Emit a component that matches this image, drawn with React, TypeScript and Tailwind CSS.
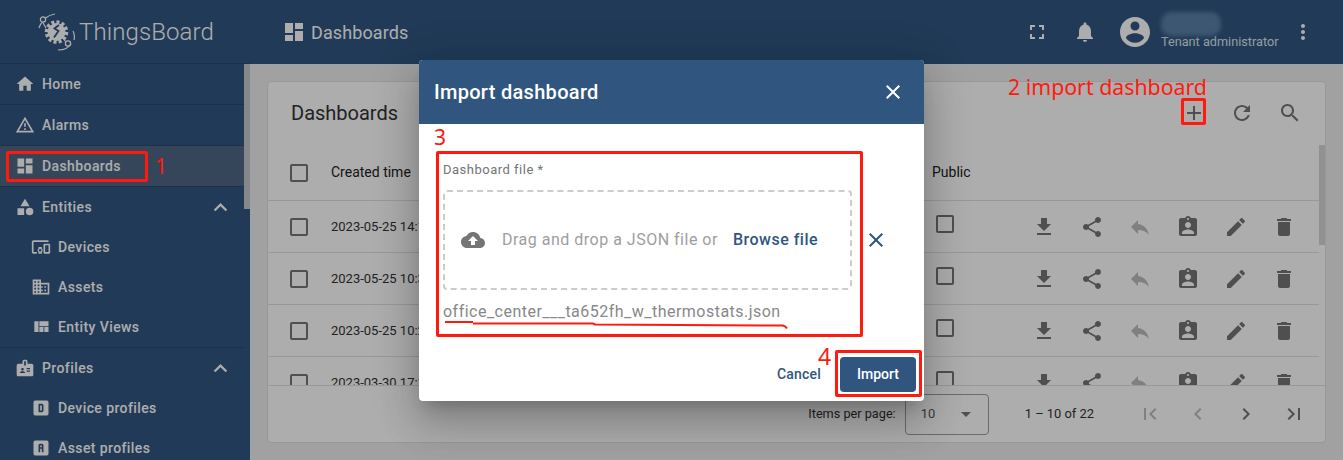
import React from "react";

const P = {
  home: "M10 20v-6h4v6h5v-8h3L12 3 2 12h3v8z",
  warn: "M12 5.99L19.53 19H4.47L12 5.99M12 2L1 21h22L12 2zm1 14h-2v2h2v-2zm0-6h-2v4h2v-4z",
  dash: "M3 13h8V3H3v10zm0 8h8v-6H3v6zm10 0h8V11h-8v10zm0-18v6h8V3h-8z",
  cat: "M12 2l-5.5 9h11zM17.5 13a4.5 4.5 0 1 0 0 9 4.5 4.5 0 0 0 0-9zM3 13.5h8v8H3z",
  dev: "M3 6h18V4H3c-1.1 0-2 .9-2 2v12c0 1.1.9 2 2 2h4v-2H3V6zm10 6H9v1.78c-.61.55-1 1.33-1 2.22s.39 1.67 1 2.22V20h4v-1.78c.61-.55 1-1.34 1-2.22s-.39-1.67-1-2.22V12zm-2 5.5c-.83 0-1.5-.67-1.5-1.5s.67-1.5 1.5-1.5 1.5.67 1.5 1.5-.67 1.5-1.5 1.5zM22 8h-6c-.5 0-1 .5-1 1v10c0 .5.5 1 1 1h6c.5 0 1-.5 1-1V9c0-.5-.5-1-1-1zm-1 10h-4v-8h4v8z",
  domain: "M12 7V3H2v18h20V7H12zM6 19H4v-2h2v2zm0-4H4v-2h2v2zm0-4H4V9h2v2zm0-4H4V5h2v2zm4 12H8v-2h2v2zm0-4H8v-2h2v2zm0-4H8V9h2v2zm0-4H8V5h2v2zm10 12h-8v-2h2v-2h-2v-2h2v-2h-2V9h8v10zm-2-8h-2v2h2v-2zm0 4h-2v2h2v-2z",
  quilt: "M10 18h5v-6h-5v6zm-6 0h5V5H4v13zm12 0h5v-6h-5v6zM10 5v6h11V5H10z",
  badge: "M20 7h-5V4c0-1.1-.9-2-2-2h-2c-1.1 0-2 .9-2 2v3H4c-1.1 0-2 .9-2 2v11c0 1.1.9 2 2 2h16c1.1 0 2-.9 2-2V9c0-1.1-.9-2-2-2zM9 12c.83 0 1.5.67 1.5 1.5S9.83 15 9 15s-1.5-.67-1.5-1.5S8.17 12 9 12zm3 6H6v-.75c0-1 2-1.5 3-1.5s3 .5 3 1.5V18zm1-9h-2V4h2v5zm5 7.5h-4V15h4v1.5zm0-3h-4V12h4v1.5z",
  boxD: "M9,7V17H13A2,2 0 0,0 15,15V9A2,2 0 0,0 13,7H9M11,9H13V15H11V9M5,3H19A2,2 0 0,1 21,5V19A2,2 0 0,1 19,21H5A2,2 0 0,1 3,19V5A2,2 0 0,1 5,3Z",
  boxA: "M11,7A2,2 0 0,0 9,9V17H11V13H13V17H15V9A2,2 0 0,0 13,7H11M11,9H13V11H11V9M5,3H19A2,2 0 0,1 21,5V19A2,2 0 0,1 19,21H5A2,2 0 0,1 3,19V5A2,2 0 0,1 5,3Z",
  less: "M12 8l-6 6 1.41 1.41L12 10.83l4.59 4.58L18 14z",
  full: "M7 14H5v5h5v-2H7v-3zm-2-4h2V7h3V5H5v5zm12 7h-3v2h5v-5h-2v3zM14 5v2h3v3h2V5h-5z",
  bell: "M12 22c1.1 0 2-.9 2-2h-4c0 1.1.89 2 2 2zm6-6v-5c0-3.07-1.64-5.64-4.5-6.32V4c0-.83-.67-1.5-1.5-1.5s-1.5.67-1.5 1.5v.68C7.63 5.36 6 7.92 6 11v5l-2 2v1h16v-1l-2-2z",
  acct: "M12 2C6.48 2 2 6.48 2 12s4.48 10 10 10 10-4.48 10-10S17.52 2 12 2zm0 3c1.66 0 3 1.34 3 3s-1.34 3-3 3-3-1.34-3-3 1.34-3 3-3zm0 14.2c-2.5 0-4.71-1.28-6-3.22.03-1.99 4-3.08 6-3.08 1.99 0 5.97 1.09 6 3.08-1.29 1.94-3.5 3.22-6 3.22z",
  more: "M12 8c1.1 0 2-.9 2-2s-.9-2-2-2-2 .9-2 2 .9 2 2 2zm0 2c-1.1 0-2 .9-2 2s.9 2 2 2 2-.9 2-2-.9-2-2-2zm0 6c-1.1 0-2 .9-2 2s.9 2 2 2 2-.9 2-2-.9-2-2-2z",
  add: "M19 13h-6v6h-2v-6H5v-2h6V5h2v6h6v2z",
  refresh: "M17.65 6.35C16.2 4.9 14.21 4 12 4c-4.42 0-7.99 3.58-7.99 8s3.57 8 7.99 8c3.73 0 6.84-2.55 7.73-6h-2.08c-.82 2.33-3.04 4-5.65 4-3.31 0-6-2.69-6-6s2.69-6 6-6c1.66 0 3.14.69 4.22 1.78L13 11h7V4l-2.35 2.35z",
  search: "M15.5 14h-.79l-.28-.27C15.41 12.59 16 11.11 16 9.5 16 5.91 13.09 3 9.5 3S3 5.91 3 9.5 5.91 16 9.5 16c1.61 0 3.09-.59 4.23-1.57l.27.28v.79l5 4.99L20.49 19l-4.99-5zm-6 0C7.01 14 5 11.99 5 9.5S7.01 5 9.5 5 14 7.01 14 9.5 11.99 14 9.5 14z",
  down: "M19 9h-4V3H9v6H5l7 7 7-7zM5 18v2h14v-2H5z",
  share: "M18 16.08c-.76 0-1.44.3-1.96.77L8.91 12.7c.05-.23.09-.46.09-.7s-.04-.47-.09-.7l7.05-4.11c.54.5 1.25.81 2.04.81 1.66 0 3-1.34 3-3s-1.34-3-3-3-3 1.34-3 3c0 .24.04.47.09.7L8.04 9.81C7.5 9.31 6.79 9 6 9c-1.66 0-3 1.34-3 3s1.34 3 3 3c.79 0 1.5-.31 2.04-.81l7.12 4.16c-.05.21-.08.43-.08.65 0 1.61 1.31 2.92 2.92 2.92s2.92-1.31 2.92-2.92-1.31-2.92-2.92-2.92z",
  reply: "M10 9V5l-7 7 7 7v-4.1c5 0 8.5 1.6 11 5.1-1-5-4-10-11-11z",
  assign: "M19 3h-4.18C14.4 1.84 13.3 1 12 1c-1.3 0-2.4.84-2.82 2H5c-1.1 0-2 .9-2 2v14c0 1.1.9 2 2 2h14c1.1 0 2-.9 2-2V5c0-1.1-.9-2-2-2zm-7 0c.55 0 1 .45 1 1s-.45 1-1 1-1-.45-1-1 .45-1 1-1zm0 4c1.66 0 3 1.34 3 3s-1.34 3-3 3-3-1.34-3-3 1.34-3 3-3zm6 12H6v-1.4c0-2 4-3.1 6-3.1s6 1.1 6 3.1V19z",
  edit: "M3 17.25V21h3.75L17.81 9.94l-3.75-3.75L3 17.25zM20.71 7.04c.39-.39.39-1.02 0-1.41l-2.34-2.34c-.39-.39-1.02-.39-1.41 0l-1.83 1.83 3.75 3.75 1.83-1.83z",
  del: "M6 19c0 1.1.9 2 2 2h8c1.1 0 2-.9 2-2V7H6v12zM19 4h-3.5l-1-1h-5l-1 1H5v2h14V4z",
  close: "M19 6.41L17.59 5 12 10.59 6.41 5 5 6.41 10.59 12 5 17.59 6.41 19 12 13.41 17.59 19 19 17.59 13.41 12z",
  cloud: "M19.35 10.04C18.67 6.59 15.64 4 12 4 9.11 4 6.6 5.64 5.35 8.04 2.34 8.36 0 10.91 0 14c0 3.31 2.69 6 6 6h13c2.76 0 5-2.24 5-5 0-2.64-2.05-4.78-4.65-4.96zM14 13v4h-4v-4H7l5-5 5 5h-3z",
  first: "M18.41 16.59L13.82 12l4.59-4.59L17 6l-6 6 6 6zM6 6h2v12H6z",
  left: "M15.41 7.41L14 6l-6 6 6 6 1.41-1.41L10.83 12z",
  right: "M10 6L8.59 7.41 13.17 12l-4.58 4.59L10 18l6-6z",
  last: "M5.59 7.41L10.18 12l-4.59 4.59L7 18l6-6-6-6zM16 6h2v12h-2z",
  drop: "M7 10l5 5 5-5z",
};

function I({ d, size = 24, className = "" }: { d: string; size?: number; className?: string }) {
  return (
    <svg width={size} height={size} viewBox="0 0 24 24" fill="currentColor" fillRule="evenodd" className={"shrink-0 " + className}>
      <path d={d} />
    </svg>
  );
}

function Logo() {
  return (
    <svg width="37" height="38" viewBox="0 0 37 38" fill="none" className="shrink-0 text-white">
      <circle cx="18.5" cy="19" r="10" stroke="currentColor" strokeWidth="3.5" strokeDasharray="3 2.2" />
      <circle cx="18.5" cy="19" r="9" fill="currentColor" />
      <path d="M21 12l-4.5 3.5 4 2.5-4.5 6.5" stroke="#305680" strokeWidth="1.8" />
      <circle cx="5" cy="6.5" r="2.6" stroke="currentColor" strokeWidth="1.3" />
      <circle cx="30" cy="30.5" r="2.6" stroke="currentColor" strokeWidth="1.3" />
      <path d="M7.5 5C10 3 13 1.5 17 1M3.5 9.5C2.5 12 1.5 13 1 15M4.5 9l3.5 6" stroke="currentColor" strokeWidth="1.2" />
      <path d="M33 31c-2 2.5-3 3.5-5 4.5-3 1.5-5 1.5-8 1.5M35 18c1.5 3 1.7 6 1 9M27.5 28.5l-3-4" stroke="currentColor" strokeWidth="1.2" />
    </svg>
  );
}

const menuText = "ml-[7px] flex-1 text-[14px] font-medium tracking-[0.4px]";

function Top({ icon, label, active }: { icon: string; label: string; active?: boolean }) {
  return (
    <div className={"flex h-[41px] items-center border-b border-[#2b4a6e] pl-[15px] pr-[10px] " + (active ? "bg-[#4e6885]" : "")}>
      <I d={icon} size={20} />
      <span className={menuText}>{label}</span>
    </div>
  );
}

function Sub({ icon, label }: { icon: string; label: string }) {
  return (
    <div className="flex h-[40px] items-center pl-[31px]">
      <I d={icon} size={20} />
      <span className={menuText}>{label}</span>
    </div>
  );
}

function Box({ className = "" }: { className?: string }) {
  return <div className={"h-[18px] w-[18px] rounded-[2px] border-2 border-[#757575] " + className} />;
}

function Row({ time }: { time: string }) {
  return (
    <div className="grid h-[52px] shrink-0 grid-cols-[63px_601px_88px_288px] items-center border-b border-[#e0e0e0] text-[13px] text-[#333]">
      <div className="pl-[22px]"><Box /></div>
      <div>{time}</div>
      <div className="pb-[6px] pl-[4px]"><Box /></div>
      <div className="flex text-[#757575]">
        {[P.down, P.share, P.reply, P.assign, P.edit, P.del].map((d, i) => (
          <div key={i} className={"flex w-[48px] justify-center " + (i === 2 ? "text-[#bdbdbd]" : "")}>
            <I d={d} />
          </div>
        ))}
      </div>
    </div>
  );
}

const shot = "shadow-[0_11px_15px_-7px_rgba(0,0,0,0.2),0_24px_38px_3px_rgba(0,0,0,0.14),0_9px_46px_8px_rgba(0,0,0,0.12)]";
const note = "absolute font-['Noto_Sans',sans-serif] text-[#ff1a0d] leading-none";
const mark = "absolute rounded-[2px] border-[3px] border-[#ff1a0d]";

export default function App() {
  return (
    <div className="relative flex h-[460px] w-full overflow-hidden bg-[#eeeeee] font-['Roboto',sans-serif]">
      <aside className="flex h-[460px] w-[250px] shrink-0 flex-col overflow-hidden bg-[#305680] text-white">
        <div className="flex h-[64px] shrink-0 items-center border-b border-[#2b4a6e] pl-[38px]">
          <Logo />
          <span className="ml-[4px] text-[24px] font-light tracking-[0.1px]">ThingsBoard</span>
        </div>
        <div className="flex flex-1">
          <nav className="w-[244px]">
            <Top icon={P.home} label="Home" />
            <Top icon={P.warn} label="Alarms" />
            <Top icon={P.dash} label="Dashboards" active />
            <div className="flex h-[40px] items-center pl-[15px] pr-[10px]">
              <I d={P.cat} size={20} />
              <span className={menuText}>Entities</span>
              <I d={P.less} size={27} />
            </div>
            <Sub icon={P.dev} label="Devices" />
            <Sub icon={P.domain} label="Assets" />
            <div className="border-b border-[#2b4a6e]"><Sub icon={P.quilt} label="Entity Views" /></div>
            <div className="flex h-[40px] items-center pl-[15px] pr-[10px]">
              <I d={P.badge} size={20} />
              <span className={menuText}>Profiles</span>
              <I d={P.less} size={27} />
            </div>
            <Sub icon={P.boxD} label="Device profiles" />
            <Sub icon={P.boxA} label="Asset profiles" />
          </nav>
          <div className="w-[6px]"><div className="h-[145px] bg-[#c4c8cc]" /></div>
        </div>
      </aside>

      <main className="flex min-w-0 flex-1 flex-col">
        <header className="flex h-[64px] shrink-0 items-center bg-[#305680] text-white">
          <I d={P.dash} className="ml-[32px]" />
          <span className="ml-[5px] flex-1 text-[18px] tracking-[0.1px]">Dashboards</span>
          <I d={P.full} className="mr-[24px]" />
          <I d={P.bell} className="mr-[20px]" />
          <I d={P.acct} size={36} />
          <div className="relative ml-[8px] flex h-[64px] w-[124px] flex-col justify-end pb-[15px]">
            <div className="absolute left-0 top-[12px] h-[24px] w-[60px] rounded-[10px] bg-[#5a80a8] blur-[2px]" />
            <span className="whitespace-nowrap text-[12.7px] leading-none text-[#dfe6ee]">Tenant administrator</span>
          </div>
          <I d={P.more} className="ml-[6px] mr-[28px]" />
        </header>

        <div className="flex min-h-0 flex-1 p-[17px]">
          <section className="flex w-[1059px] flex-col rounded-[4px] border border-[#e0e0e0] bg-white">
            <div className="flex h-[63px] shrink-0 items-center pb-[2px] text-[#757575]">
              <span className="ml-[23px] flex-1 text-[20px] text-[#333]">Dashboards</span>
              <div className="flex w-[48px] justify-center"><I d={P.add} /></div>
              <div className="flex w-[48px] justify-center"><I d={P.refresh} /></div>
              <div className="mr-[11px] flex w-[48px] justify-center"><I d={P.search} /></div>
            </div>
            <div className="flex h-[241px] shrink-0 border-b border-[#e0e0e0]">
              <div className="flex min-w-0 flex-1 flex-col overflow-hidden">
                <div className="grid h-[56px] shrink-0 grid-cols-[63px_601px_88px_288px] items-center border-b border-[#e0e0e0] text-[14px] text-[#222]">
                  <div className="pl-[22px]"><Box /></div>
                  <div>Created time</div>
                  <div>Public</div>
                  <div />
                </div>
                <Row time="2023-05-25 14:17:36" />
                <Row time="2023-05-25 10:35:07" />
                <Row time="2023-05-25 10:21:44" />
                <Row time="2023-03-30 17:12:03" />
              </div>
              <div className="w-[6px] shrink-0"><div className="h-[100px] bg-[#d6d6d6]" /></div>
            </div>
            <div className="flex flex-1 items-center justify-end pr-[7px] text-[12.9px] text-[#333]">
              <span className="text-[12.7px]">Items per page:</span>
              <div className="ml-[9px] flex h-[41px] w-[84px] items-center justify-between rounded-[4px] border border-[#9e9e9e] pl-[15px] pr-[10px] text-[#555]">
                <span>10</span>
                <I d={P.drop} className="text-[#757575]" />
              </div>
              <span className="ml-[36px] mr-[32px]">1 – 10 of 22</span>
              <div className="flex w-[48px] justify-center text-[#bdbdbd]"><I d={P.first} /></div>
              <div className="flex w-[48px] justify-center text-[#bdbdbd]"><I d={P.left} /></div>
              <div className="flex w-[48px] justify-center text-[#757575]"><I d={P.right} /></div>
              <div className="flex w-[48px] justify-center text-[#757575]"><I d={P.last} /></div>
            </div>
          </section>
        </div>
      </main>

      <div className="absolute inset-0 bg-black/32" />

      <div className={"absolute left-[419px] top-[60px] flex h-[341px] w-[505px] flex-col overflow-hidden rounded-[4px] bg-white " + shot}>
        <div className="flex h-[64px] shrink-0 items-center justify-between bg-[#305680] pl-[15px] pr-[19px] text-white">
          <span className="text-[20px] font-medium tracking-[0.3px]">Import dashboard</span>
          <I d={P.close} />
        </div>
        <div className="flex flex-1 flex-col pl-[24px] pt-[39px]">
          <div className="text-[13px] leading-[14px] tracking-[0.5px] text-[#757575]">Dashboard file *</div>
          <div className="mt-[13px] flex items-center">
            <div className="flex h-[100px] w-[409px] items-center rounded-[4px] border-2 border-dashed border-[#cccccc] pl-[16px]">
              <I d={P.cloud} className="text-[#757575]" />
              <span className="ml-[17px] text-[16px] tracking-[0.5px] text-[#9e9e9e]">Drag and drop a JSON file or</span>
              <span className="ml-[15px] text-[16px] font-medium tracking-[0.5px] text-[#305680]">Browse file</span>
            </div>
            <I d={P.close} className="ml-[12px] text-[#305680]" />
          </div>
          <div className="mt-[13px] text-[16px] leading-[18px] tracking-[0.48px] text-[#888888]">office_center___ta652fh_w_thermostats.json</div>
          <div className="mt-auto flex items-center justify-end pb-[9px] pr-[8px]">
            <span className="mr-[19px] text-[14px] font-medium tracking-[0.2px] text-[#305680]">Cancel</span>
            <div className="flex h-[35px] w-[76px] items-center justify-center rounded-[4px] bg-[#305680] text-[14px] font-medium text-white">Import</div>
          </div>
        </div>
      </div>

      <div className={mark + " left-[6px] top-[151px] h-[31px] w-[142px]"} />
      <span className={note + " left-[155px] top-[156px] text-[21px]"}>1</span>
      <span className={note + " left-[1008px] top-[76px] text-[21.3px]"}>2 import dashboard</span>
      <div className={mark + " left-[1181px] top-[98px] h-[27px] w-[25px]"} />
      <span className={note + " left-[434px] top-[127px] text-[21px]"}>3</span>
      <div className={mark + " left-[436px] top-[151px] h-[186px] w-[427px]"} />
      <svg className="absolute left-[440px] top-[315px]" width="352" height="18" fill="none" stroke="#ff1a0d" strokeWidth="2">
        <path d="M5 7h28M33 8.5h120l2 1 188 1q3 1 4 3" />
      </svg>
      <span className={note + " left-[818px] top-[345px] text-[23px]"}>4</span>
      <div className={mark + " left-[835px] top-[350px] h-[47px] w-[87px]"} />
    </div>
  );
}
